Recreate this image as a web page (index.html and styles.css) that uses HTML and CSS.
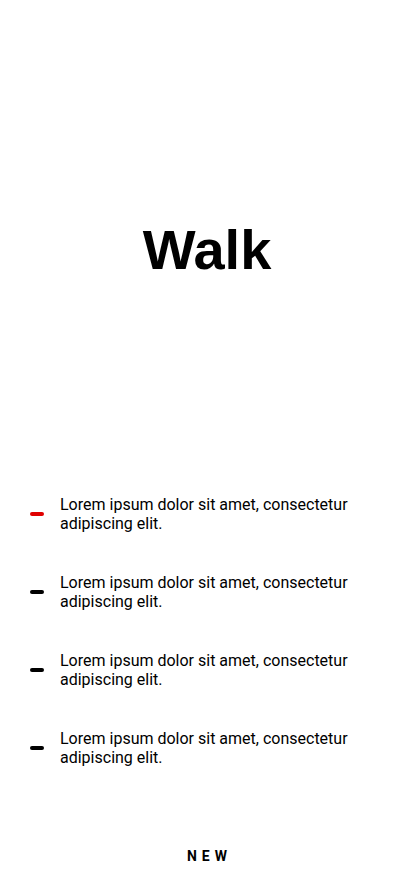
FILE: index.html
```html
<!DOCTYPE html>
<html>
<head>
<meta charset="utf-8">
<link rel="stylesheet" href="styles.css">
</head>
<body>
<div class="screen">
  <header class="hero">
    <h1 class="title">Walk</h1>
  </header>
  <ul class="list">
    <li class="item"><span class="dash active"></span><p class="text">Lorem ipsum dolor sit amet, consectetur adipiscing elit.</p></li>
    <li class="item"><span class="dash"></span><p class="text">Lorem ipsum dolor sit amet, consectetur adipiscing elit.</p></li>
    <li class="item"><span class="dash"></span><p class="text">Lorem ipsum dolor sit amet, consectetur adipiscing elit.</p></li>
    <li class="item"><span class="dash"></span><p class="text">Lorem ipsum dolor sit amet, consectetur adipiscing elit.</p></li>
  </ul>
  <footer class="footer"><span class="new">NEW</span></footer>
</div>
</body>
</html>
```
FILE: styles.css
```css
* { box-sizing: border-box; }
html, body { margin: 0; padding: 0; background: #fff; }
.screen {
  width: 414px;
  height: 896px;
  display: flex;
  flex-direction: column;
  font-family: Roboto, "Liberation Sans", sans-serif;
  color: #000;
}
.hero {
  height: 495px;
  padding-top: 218px;
  display: flex;
  justify-content: center;
}
.title {
  margin: 0;
  font-family: "Liberation Sans", Arial, sans-serif;
  font-weight: 700;
  font-size: 56px;
  line-height: 64px;
  letter-spacing: 0;
}
.list {
  list-style: none;
  margin: 0;
  padding: 0 40px 0 30px;
  display: flex;
  flex-direction: column;
  gap: 40px;
}
.item {
  display: flex;
  align-items: center;
  gap: 16px;
}
.dash {
  flex: none;
  width: 14px;
  height: 4px;
  border-radius: 2px;
  background: #000;
}
.dash.active { background: #e00000; }
.text {
  margin: 0;
  font-size: 16px;
  line-height: 19px;
}
.footer {
  margin-top: auto;
  padding-bottom: 32px;
  display: flex;
  justify-content: center;
}
.new {
  font-weight: 700;
  font-size: 14px;
  letter-spacing: 5px;
  padding-left: 5px;
}
```
